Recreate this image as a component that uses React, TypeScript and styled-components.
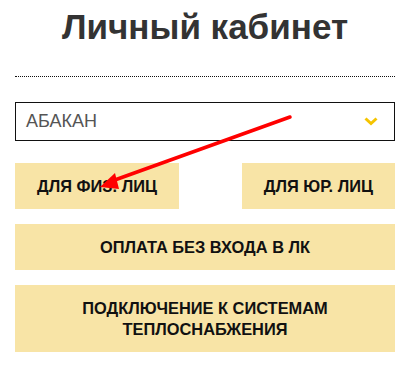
import React from 'react';
import styled, { createGlobalStyle } from 'styled-components';

const GlobalStyle = createGlobalStyle`
  html, body {
    margin: 0;
    padding: 0;
    background: #fff;
    font-family: "Liberation Sans", Arial, sans-serif;
  }
`;

const Page = styled.div`
  position: relative;
  width: 407px;
  padding: 0 12px 0 15px;
  box-sizing: border-box;
`;

const Title = styled.h1`
  margin: 0;
  padding-top: 7px;
  height: 47px;
  font-size: 35px;
  line-height: 40px;
  font-weight: 700;
  color: #333;
  text-align: center;
`;

const Divider = styled.div`
  margin-top: 22px;
  border-top: 1px dotted #111;
`;

const Select = styled.div`
  margin-top: 25px;
  height: 39px;
  box-sizing: border-box;
  border: 1px solid #111;
  display: flex;
  align-items: center;
  justify-content: space-between;
  padding: 0 16px 0 10px;
`;

const SelectValue = styled.span`
  font-size: 18px;
  color: #555;
  text-transform: uppercase;
`;

const Row = styled.div`
  display: flex;
  justify-content: space-between;
  margin-top: 22px;
`;

const Button = styled.div<{ $tall?: boolean; $full?: boolean }>`
  background: #f8e4a6;
  color: #111;
  font-size: 16.4px;
  font-weight: 700;
  line-height: 21px;
  text-transform: uppercase;
  text-align: center;
  display: flex;
  align-items: center;
  justify-content: center;
  height: ${p => (p.$tall ? '67px' : '46px')};
  padding: 0 22px;
  box-sizing: border-box;
  margin-top: ${p => (p.$full ? '15px' : '0')};
`;

const Arrow = styled.svg`
  position: absolute;
  left: 0;
  top: 0;
  pointer-events: none;
`;

const Chevron = () => (
  <svg width="14" height="9" viewBox="0 0 14 9">
    <path d="M1.5 1.5 L7 6.5 L12.5 1.5" fill="none" stroke="#f5c400" strokeWidth="3" />
  </svg>
);

const App: React.FC = () => (
  <>
    <GlobalStyle />
    <Page>
      <Title>Личный кабинет</Title>
      <Divider />
      <Select>
        <SelectValue>Абакан</SelectValue>
        <Chevron />
      </Select>
      <Row>
        <Button>Для физ. лиц</Button>
        <Button>Для юр. лиц</Button>
      </Row>
      <Button $full>Оплата без входа в ЛК</Button>
      <Button $full $tall>
        Подключение к системам
        <br />
        теплоснабжения
      </Button>
      <Arrow width="407" height="373" viewBox="0 0 407 373">
        <line x1="290" y1="117" x2="112" y2="181" stroke="#f00" strokeWidth="3.5" strokeLinecap="round" />
        <polygon points="100,187 115,173 119,189" fill="#f00" />
      </Arrow>
    </Page>
  </>
);

export default App;
